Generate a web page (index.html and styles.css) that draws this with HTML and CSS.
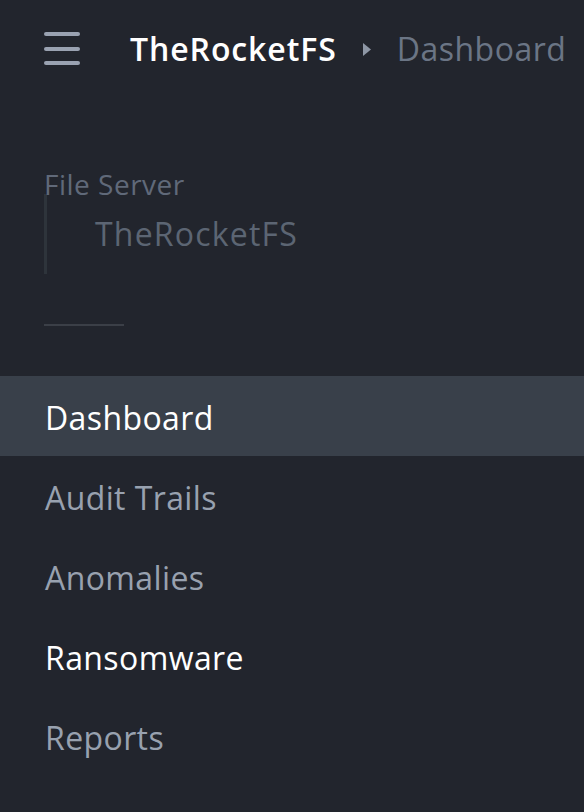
FILE: index.html
```html
<!DOCTYPE html>
<html lang="en">
<head>
<meta charset="utf-8">
<title>TheRocketFS - Dashboard</title>
<link rel="stylesheet" href="styles.css">
</head>
<body>
<div class="app">
  <header class="topbar">
    <button class="menu-btn" aria-label="Menu">
      <span class="bar"></span><span class="bar"></span><span class="bar"></span>
    </button>
    <nav class="crumbs">
      <span class="crumb-root">TheRocketFS</span>
      <svg class="crumb-sep" width="8" height="13" viewBox="0 0 8 13"><path d="M0 0 L8 6.5 L0 13 Z" fill="#8e97a5"/></svg>
      <span class="crumb-current">Dashboard</span>
    </nav>
  </header>

  <section class="server">
    <div class="server-label">File Server</div>
    <div class="server-box">
      <div class="server-name">TheRocketFS</div>
    </div>
  </section>

  <div class="divider"></div>

  <ul class="nav">
    <li class="nav-item active">Dashboard</li>
    <li class="nav-item">Audit Trails</li>
    <li class="nav-item">Anomalies</li>
    <li class="nav-item bright">Ransomware</li>
    <li class="nav-item">Reports</li>
  </ul>
</div>
</body>
</html>
```
FILE: styles.css
```css
html, body {
  margin: 0;
  padding: 0;
  background: #22252d;
}
body {
  font-family: "Open Sans", "Liberation Sans", sans-serif;
  width: 584px;
  height: 812px;
  overflow: hidden;
}
.app {
  display: flex;
  flex-direction: column;
}
.topbar {
  display: flex;
  align-items: center;
  height: 100px;
  padding-left: 44px;
}
.menu-btn {
  display: flex;
  flex-direction: column;
  gap: 10.5px;
  width: 36px;
  padding: 0;
  margin: -3px 50px 0 0;
  border: 0;
  background: none;
}
.bar {
  display: block;
  height: 4px;
  width: 36px;
  border-radius: 2px;
  background: #9aa2b1;
}
.crumbs {
  display: flex;
  align-items: center;
  font-size: 32px;
  line-height: 44px;
  margin-top: -2px;
}
.crumb-root {
  color: #ffffff;
  font-weight: 600;
  letter-spacing: 0.9px;
}
.crumb-sep {
  margin: 0 26px 0 26px;
}
.crumb-current {
  color: #6b7585;
  letter-spacing: 0.5px;
}
.server {
  padding: 70px 0 0 44px;
}
.server-label {
  color: #606979;
  font-size: 28px;
  line-height: 28px;
  letter-spacing: 0.5px;
}
.server-box {
  border-left: 3px solid #2e343b;
  height: 80px;
  margin-top: -4px;
  padding: 24px 0 0 48px;
  box-sizing: border-box;
}
.server-name {
  color: #5c6573;
  font-size: 32px;
  line-height: 32px;
  letter-spacing: 1.2px;
}
.divider {
  width: 80px;
  height: 2px;
  margin: 50px 0 0 44px;
  background: #3b3f47;
}
.nav {
  list-style: none;
  margin: 50px 0 0 0;
  padding: 0;
}
.nav-item {
  height: 80px;
  box-sizing: border-box;
  padding: 3px 0 0 45px;
  line-height: 77px;
  font-size: 32px;
  letter-spacing: 0.4px;
  color: #98a1af;
}
.nav-item.active {
  background: #39404a;
  color: #ffffff;
}
.nav-item.bright {
  color: #ffffff;
}
```
